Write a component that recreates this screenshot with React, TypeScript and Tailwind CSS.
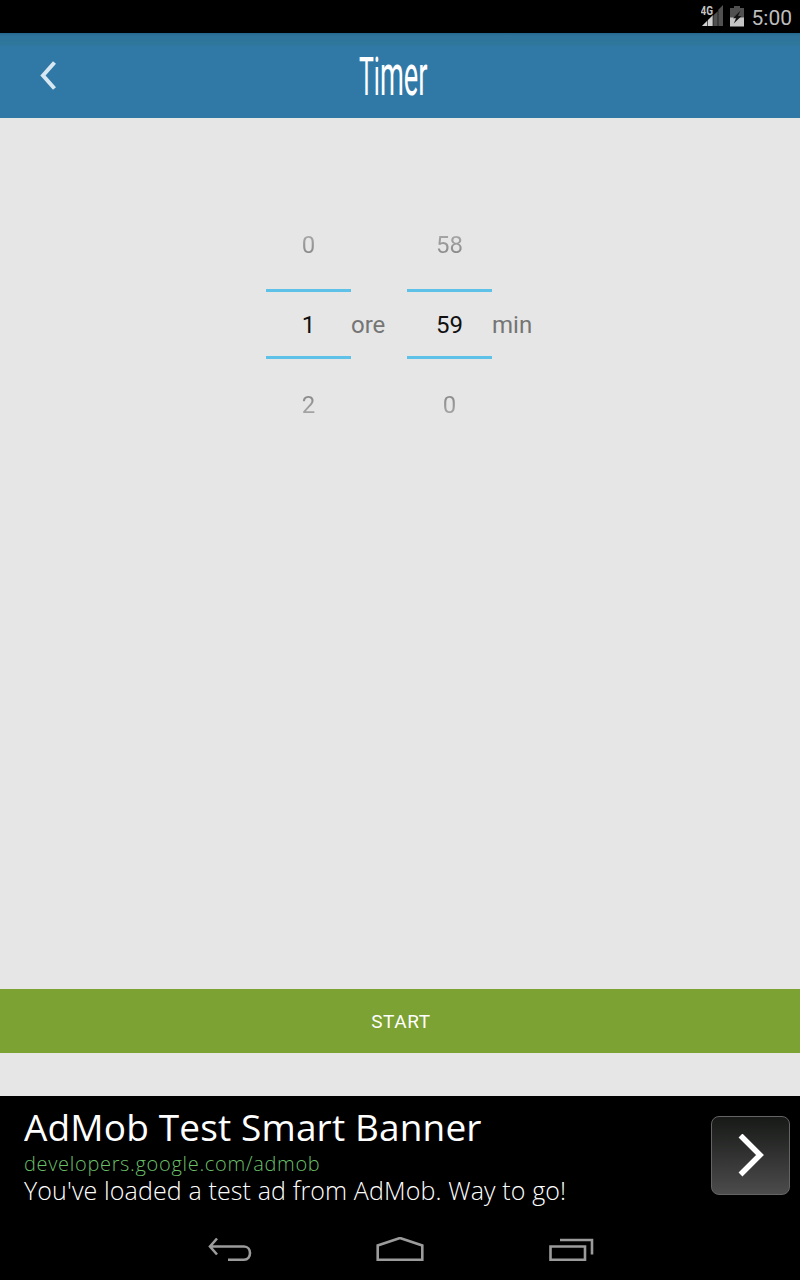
import React from "react";

type WheelProps = { previous: string; current: string; next: string; label: string; width: string };

function Wheel({ previous, current, next, label, width }: WheelProps) {
  return (
    <div className={`flex items-center ${width}`}>
      <div className="flex w-[85px] flex-col items-center text-center text-2xl">
        <div className="flex h-[62px] items-start pt-[2px] text-transparent">
          <span className="h-[32px] leading-8 bg-gradient-to-b from-[#b0b0b0] to-[#808080] bg-clip-text">{previous}</span>
        </div>
        <div className="flex h-[70px] w-full items-center justify-center border-y-[3px] border-[#5ec2e8] pt-[2px] text-[#111]">{current}</div>
        <div className="flex h-[62px] items-end text-transparent">
          <span className="h-[32px] leading-8 bg-gradient-to-b from-[#808080] to-[#b0b0b0] bg-clip-text">{next}</span>
        </div>
      </div>
      <span className="pt-[2px] text-2xl text-[#757575]">{label}</span>
    </div>
  );
}

function StatusBar() {
  return (
    <div className="flex h-[33px] shrink-0 items-center justify-end bg-black pr-2 text-[#bdbdbd]">
      <svg width="24" height="24" viewBox="0 0 24 24" className="mr-[5px]">
        <path d="M1 21H22V0L17 5V6Z" fill="#505050" />
        <path d="M1 21L12 10V21Z" fill="#d0d0d0" />
        <path d="M6.5 11V21M12 9V21M17 5V21" stroke="#000" strokeWidth="0.6" />
        <rect x="0" y="0" width="12" height="10" fill="#000" />
        <text x="-0.5" y="10" fontFamily="Roboto" fontSize="12" fontWeight="700" fill="#c4c4c4" textLength="12.5" lengthAdjust="spacingAndGlyphs">4G</text>
      </svg>
      <svg width="14" height="22" viewBox="0 0 14 22" className="mr-2">
        <path d="M4 0H10V2H14V12H0V2H4Z" fill="#505050" />
        <path d="M0 11.5H14V20.5H0Z" fill="#c4c4c4" />
        <path d="M10.5 4.5L3 12.2H6L3.8 17.5L11.5 10H8Z" fill="#151515" />
      </svg>
      <span className="pt-[3px] text-[21px] leading-6">5:00</span>
    </div>
  );
}

export default function App() {
  return (
    <div className="flex h-[1280px] w-[800px] flex-col overflow-hidden bg-[#e6e6e6] font-['Roboto',sans-serif]">
      <StatusBar />
      <header className="grid h-[85px] shrink-0 grid-cols-[120px_1fr_120px] items-center bg-[linear-gradient(#26668f_0px,#2e749b_3px,#30779c_12px,#3079a6_13px)]">
        <svg width="18" height="30" viewBox="0 0 18 30" className="ml-10" fill="none" stroke="#d7e8f2" strokeWidth="4">
          <path d="M14.5 1.5L3 14.5L14.5 27.5" />
        </svg>
        <h1 className="flex h-[60px] w-[150px] origin-left translate-x-[239px] scale-x-[0.47] items-baseline whitespace-nowrap text-[53px] leading-[58px] text-white">
          <span>Ti<span className="text-[58px]">mer</span></span>
        </h1>
      </header>
      <main className="flex flex-1 flex-col">
        <div className="ml-[266px] mt-[109px] flex h-[194px]">
          <Wheel previous="0" current="1" next="2" label="ore" width="w-[141px]" />
          <Wheel previous="58" current="59" next="0" label="min" width="w-[130px]" />
        </div>
      </main>
      <button className="mb-[43px] h-16 shrink-0 bg-[#7ba232] pl-[2px] pt-[2px] text-[19px] tracking-[0.6px] text-white">START</button>
      <section className="flex h-[120px] shrink-0 items-start justify-between bg-black pl-6 pr-[10px] font-['Open_Sans',sans-serif]">
        <div className="whitespace-nowrap pt-[7px]">
          <p className="h-[49px] text-[37px] leading-[48px] tracking-[0.15px] text-white">AdMob Test Smart Banner</p>
          <p className="h-[22px] text-[20px] font-light leading-6 tracking-[0.68px] text-[#6abf69]">developers.google.com/admob</p>
          <p className="h-8 text-[25px] font-light leading-8 tracking-[0.13px] text-white">You've loaded a test ad from AdMob. Way to go!</p>
        </div>
        <div className="mt-5 flex size-[79px] items-center justify-center rounded-lg border border-[#646464] bg-gradient-to-b from-[#181a18] to-[#4c4c4c]">
          <svg width="28" height="44" viewBox="0 0 28 44" fill="none" stroke="#fff" strokeWidth="5.5">
            <path d="M3.5 1.5L23 21L3.5 40.5" />
          </svg>
        </div>
      </section>
      <nav className="flex h-16 shrink-0 items-center justify-between bg-black pl-[208px] pr-[206px] pt-1">
        <svg width="44" height="26" viewBox="0 0 44 26" fill="none" stroke="#9b9b9b" strokeWidth="2.6">
          <path d="M9 1.5L2 9.5L9 17.5M2 9.5H36C44 9.5 44 22.7 36 22.7H20" />
        </svg>
        <svg width="48" height="26" viewBox="0 0 48 26" className="-translate-x-px" fill="none" stroke="#9b9b9b" strokeWidth="2.6">
          <path d="M1.7 22.7V8.5L24 1L46.3 8.5V22.7Z" />
        </svg>
        <svg width="45" height="26" viewBox="0 0 45 26" fill="none" stroke="#9b9b9b" strokeWidth="2.6">
          <path d="M1.5 9.5H36V22.7H1.5ZM11 3H43V17.5" />
        </svg>
      </nav>
    </div>
  );
}
